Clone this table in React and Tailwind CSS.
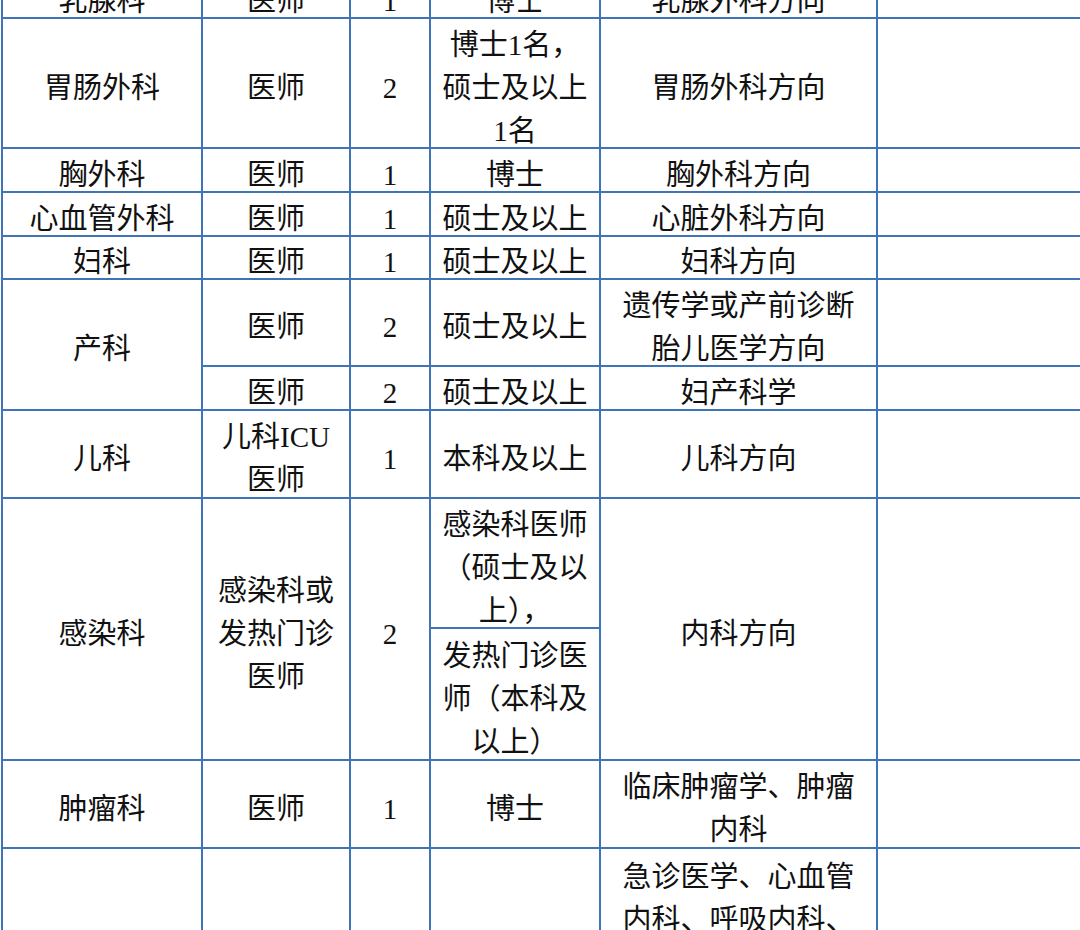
const cells = [
  // row 1 (cut off at top)
  { t: ['乳腺科'], c: 'col-start-1 row-start-1' },
  { t: ['医师'], c: 'col-start-2 row-start-1' },
  { t: ['1'], c: 'col-start-3 row-start-1' },
  { t: ['博士'], c: 'col-start-4 row-start-1' },
  { t: ['乳腺外科方向'], c: 'col-start-5 row-start-1' },
  { t: [], c: 'col-start-6 row-start-1' },
  // row 2
  { t: ['胃肠外科'], c: 'col-start-1 row-start-2' },
  { t: ['医师'], c: 'col-start-2 row-start-2' },
  { t: ['2'], c: 'col-start-3 row-start-2' },
  { t: ['博士1名，', '硕士及以上', '1名'], c: 'col-start-4 row-start-2' },
  { t: ['胃肠外科方向'], c: 'col-start-5 row-start-2' },
  { t: [], c: 'col-start-6 row-start-2' },
  // row 3
  { t: ['胸外科'], c: 'col-start-1 row-start-3' },
  { t: ['医师'], c: 'col-start-2 row-start-3' },
  { t: ['1'], c: 'col-start-3 row-start-3' },
  { t: ['博士'], c: 'col-start-4 row-start-3' },
  { t: ['胸外科方向'], c: 'col-start-5 row-start-3' },
  { t: [], c: 'col-start-6 row-start-3' },
  // row 4
  { t: ['心血管外科'], c: 'col-start-1 row-start-4' },
  { t: ['医师'], c: 'col-start-2 row-start-4' },
  { t: ['1'], c: 'col-start-3 row-start-4' },
  { t: ['硕士及以上'], c: 'col-start-4 row-start-4' },
  { t: ['心脏外科方向'], c: 'col-start-5 row-start-4' },
  { t: [], c: 'col-start-6 row-start-4' },
  // row 5
  { t: ['妇科'], c: 'col-start-1 row-start-5' },
  { t: ['医师'], c: 'col-start-2 row-start-5' },
  { t: ['1'], c: 'col-start-3 row-start-5' },
  { t: ['硕士及以上'], c: 'col-start-4 row-start-5' },
  { t: ['妇科方向'], c: 'col-start-5 row-start-5' },
  { t: [], c: 'col-start-6 row-start-5' },
  // rows 6-7 产科
  { t: ['产科'], c: 'col-start-1 row-start-6 row-span-2' },
  { t: ['医师'], c: 'col-start-2 row-start-6' },
  { t: ['2'], c: 'col-start-3 row-start-6' },
  { t: ['硕士及以上'], c: 'col-start-4 row-start-6' },
  { t: ['遗传学或产前诊断', '胎儿医学方向'], c: 'col-start-5 row-start-6' },
  { t: [], c: 'col-start-6 row-start-6' },
  { t: ['医师'], c: 'col-start-2 row-start-7' },
  { t: ['2'], c: 'col-start-3 row-start-7' },
  { t: ['硕士及以上'], c: 'col-start-4 row-start-7' },
  { t: ['妇产科学'], c: 'col-start-5 row-start-7' },
  { t: [], c: 'col-start-6 row-start-7' },
  // row 8
  { t: ['儿科'], c: 'col-start-1 row-start-8' },
  { t: ['儿科ICU', '医师'], c: 'col-start-2 row-start-8' },
  { t: ['1'], c: 'col-start-3 row-start-8' },
  { t: ['本科及以上'], c: 'col-start-4 row-start-8' },
  { t: ['儿科方向'], c: 'col-start-5 row-start-8' },
  { t: [], c: 'col-start-6 row-start-8' },
  // rows 9-10 感染科
  { t: ['感染科'], c: 'col-start-1 row-start-9 row-span-2' },
  { t: ['感染科或', '发热门诊', '医师'], c: 'col-start-2 row-start-9 row-span-2' },
  { t: ['2'], c: 'col-start-3 row-start-9 row-span-2' },
  { t: ['感染科医师', '（硕士及以', '上），'], c: 'col-start-4 row-start-9' },
  { t: ['发热门诊医', '师（本科及', '以上）'], c: 'col-start-4 row-start-10' },
  { t: ['内科方向'], c: 'col-start-5 row-start-9 row-span-2' },
  { t: [], c: 'col-start-6 row-start-9 row-span-2' },
  // row 11
  { t: ['肿瘤科'], c: 'col-start-1 row-start-11' },
  { t: ['医师'], c: 'col-start-2 row-start-11' },
  { t: ['1'], c: 'col-start-3 row-start-11' },
  { t: ['博士'], c: 'col-start-4 row-start-11' },
  { t: ['临床肿瘤学、肿瘤', '内科'], c: 'col-start-5 row-start-11' },
  { t: [], c: 'col-start-6 row-start-11' },
  // row 12 (runs off the bottom)
  { t: [], c: 'col-start-1 row-start-12' },
  { t: [], c: 'col-start-2 row-start-12' },
  { t: [], c: 'col-start-3 row-start-12' },
  { t: [], c: 'col-start-4 row-start-12' },
  { t: ['急诊医学、心血管', '内科、呼吸内科、', '重症医学科方向'], c: 'col-start-5 row-start-12 items-start pt-[2px]' },
  { t: [], c: 'col-start-6 row-start-12' },
];

const Cell = ({ lines, className }) => (
  <div className={`flex items-center justify-center bg-white text-center ${className}`}>
    <div className="translate-y-[5px]">
      {lines.map((line, i) => (
        <div key={i} className="whitespace-nowrap">{line}</div>
      ))}
    </div>
  </div>
);

const App = () => {
  return (
    <div className="w-[1080px] h-[930px] overflow-hidden bg-white">
      <div
        className="grid w-max -mt-[27px] ml-[1px] p-[2px] pr-0 gap-[2px] bg-[#3f74b8] grid-cols-[198px_146px_78px_168px_275px_210px] grid-rows-[42px_128px_42px_42px_41px_85px_42px_86px_128px_130px_86px_200px] text-[29px] leading-[43px] text-[#111111]"
        style={{ fontFamily: '"Liberation Serif", "Noto Sans CJK SC", serif' }}
      >
        {cells.map((cell, i) => (
          <Cell key={i} lines={cell.t} className={cell.c} />
        ))}
      </div>
    </div>
  );
};

export default App;
